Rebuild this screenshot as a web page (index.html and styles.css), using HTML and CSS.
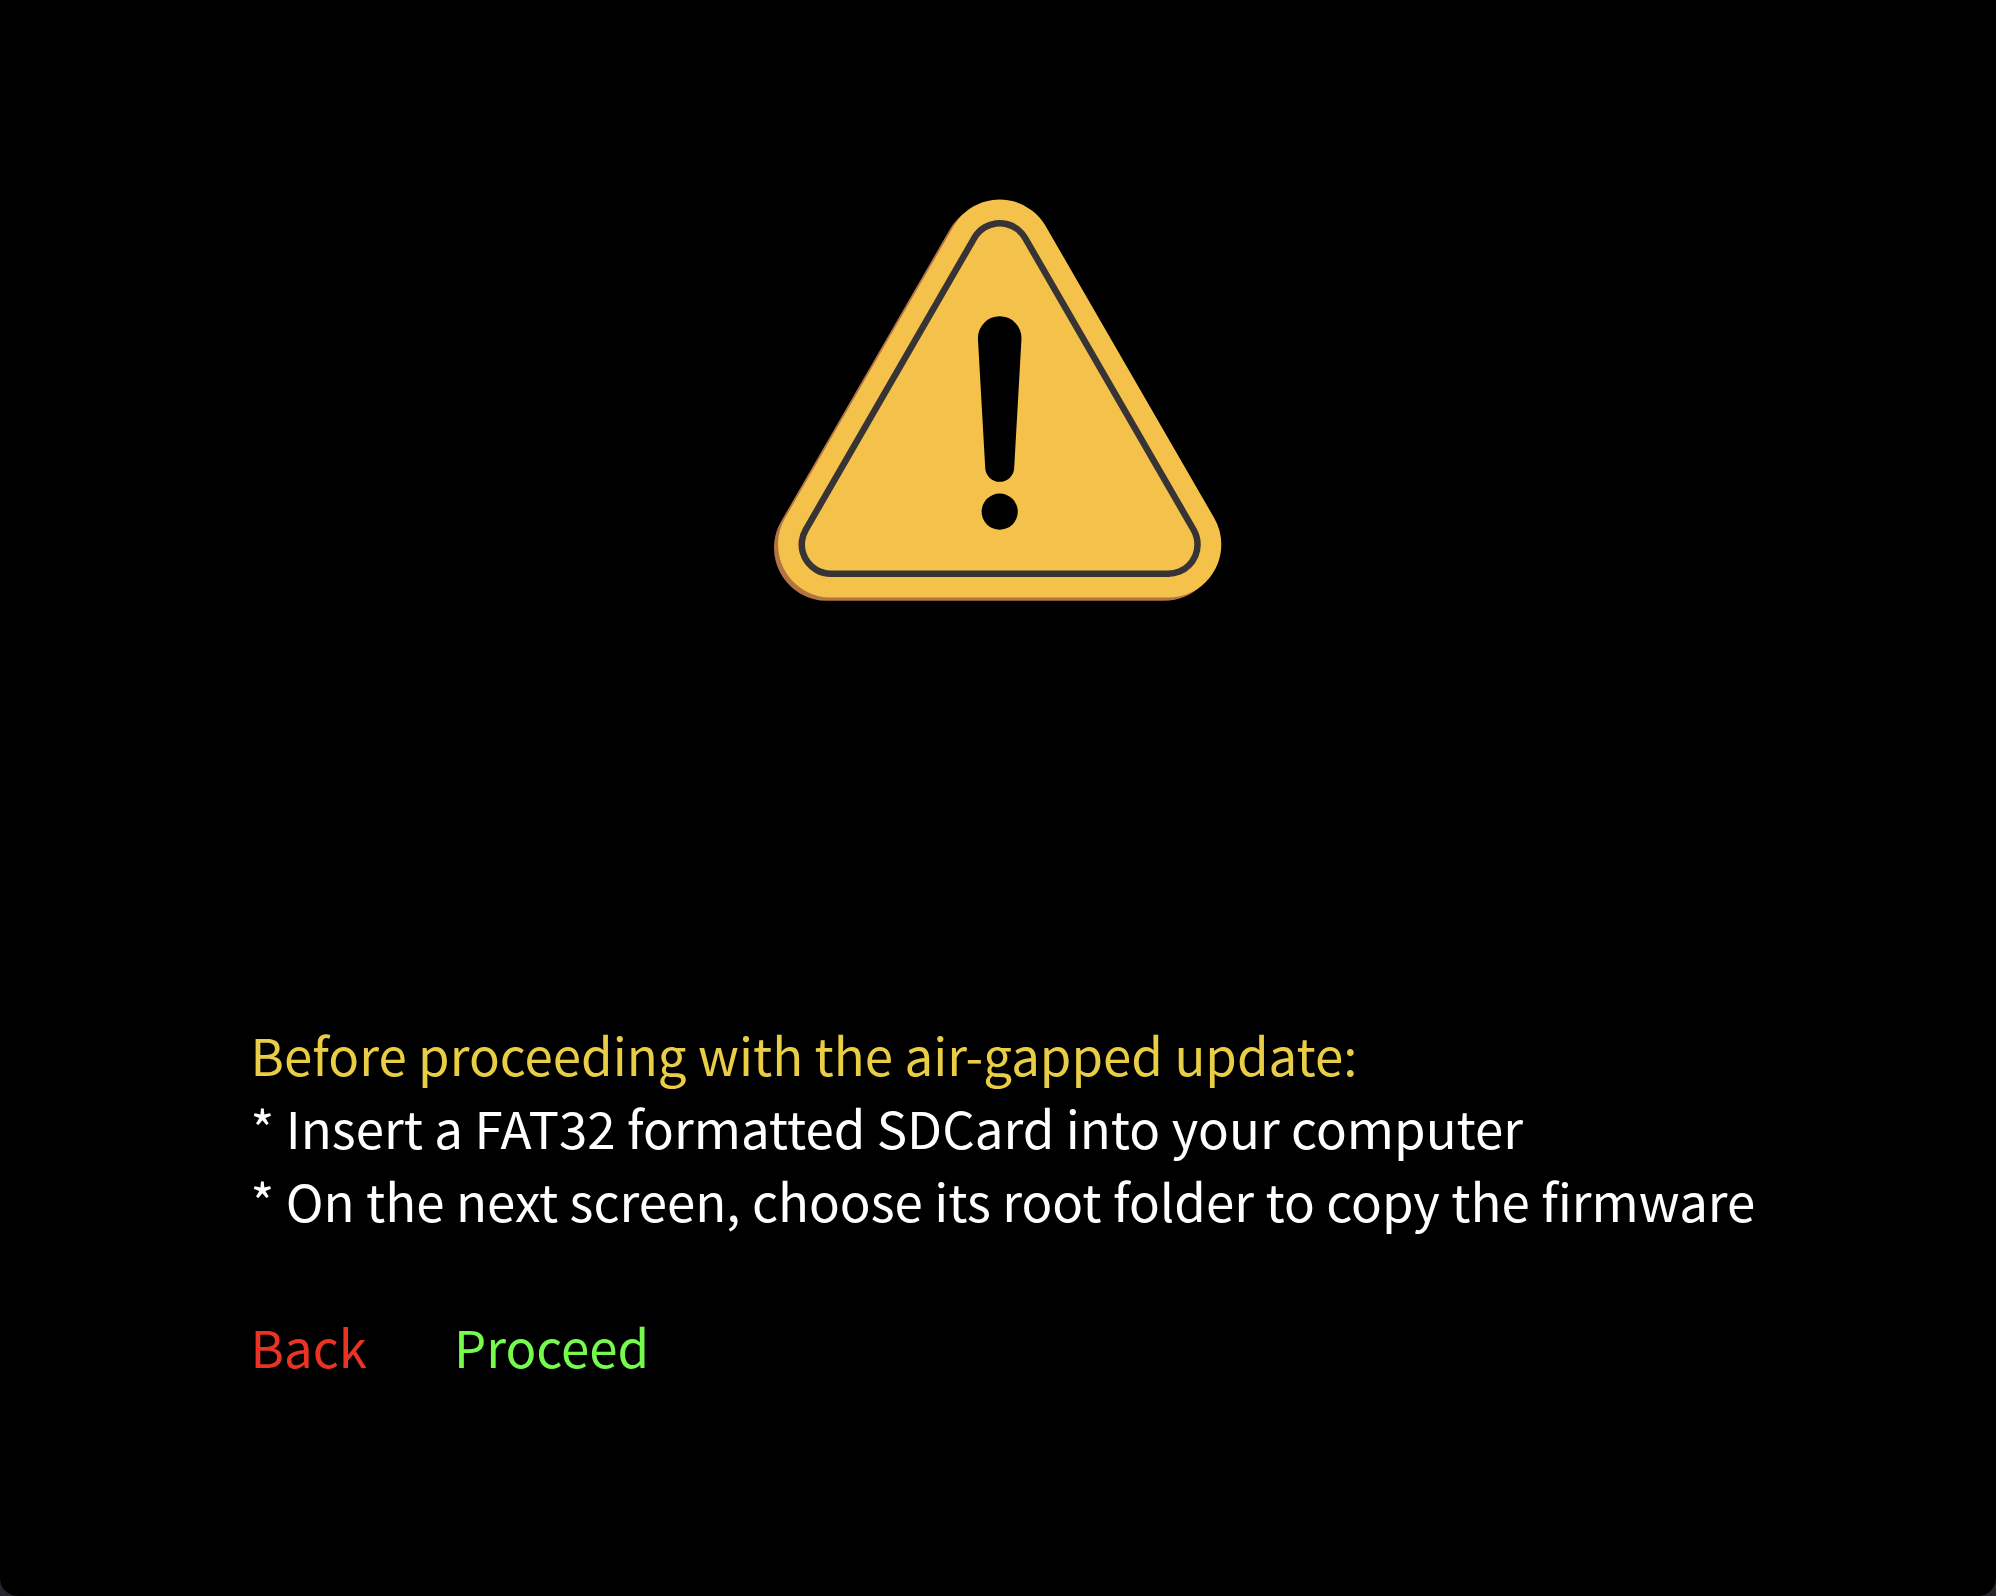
FILE: index.html
```html
<!DOCTYPE html>
<html lang="en">
<head>
<meta charset="utf-8">
<title>Air-gapped update</title>
<link rel="stylesheet" href="styles.css">
</head>
<body>
<main class="screen">
  <svg class="warning" viewBox="-2 0 480 440" role="img" aria-label="Warning">
    <path class="shade" d="M67 367.8H404.3L235.7 75.8Z"/>
    <path class="plate" d="M71 364.5H408.3L239.7 72.5Z"/>
    <path class="rim" d="M71 364.5H408.3L239.7 72.5Z"/>
    <path class="face" d="M71 364.5H408.3L239.7 72.5Z"/>
    <path d="M217.9 158.2A21.8 22 0 0 1 261.5 158.2L254.2 287.6A14.5 14.2 0 0 1 225.2 287.6Z"/>
    <circle cx="239.7" cy="331.6" r="18.1"/>
  </svg>
  <section class="message">
    <p class="title">Before proceeding with the air-gapped update:</p>
    <p>* Insert a FAT32 formatted SDCard into your computer</p>
    <p>* On the next screen, choose its root folder to copy the firmware</p>
  </section>
  <nav class="actions">
    <button class="back" type="button">Back</button>
    <button class="proceed" type="button">Proceed</button>
  </nav>
</main>
</body>
</html>
```
FILE: styles.css
```css
body {
  margin: 0;
  background: #25252b;
  color: #fff;
  font-family: "Noto Sans CJK SC", "Noto Sans", sans-serif;
  font-size: 51px;
  line-height: 73px;
}

.screen {
  box-sizing: border-box;
  min-height: 100vh;
  padding: 180px 0 160px 0;
  display: flex;
  flex-direction: column;
  background: #000;
  border-radius: 0 0 18px 18px;
}

.warning {
  width: 480px;
  height: 440px;
  align-self: center;
  margin-bottom: 398px;
}

.warning path {
  stroke-linejoin: round;
}

.warning .shade {
  fill: #b27442;
  stroke: #b27442;
  stroke-width: 106;
}

.warning .plate {
  fill: #f4c24a;
  stroke: #f4c24a;
  stroke-width: 106;
}

.warning .rim {
  fill: #383436;
  stroke: #383436;
  stroke-width: 65;
}

.warning .face {
  fill: #f4c24a;
  stroke: #f4c24a;
  stroke-width: 52;
}

.message,
.actions {
  padding: 0 5% 0 12.55%;
}

.message p {
  margin: 0;
}

.message .title {
  color: #e9ce45;
}

.actions {
  display: flex;
  gap: 87px;
  margin-top: 73px;
}

.actions button {
  padding: 0;
  border: 0;
  background: none;
  font: inherit;
  cursor: pointer;
}

.actions .back {
  color: #eb3323;
}

.actions .proceed {
  color: #75fb4c;
}
```
